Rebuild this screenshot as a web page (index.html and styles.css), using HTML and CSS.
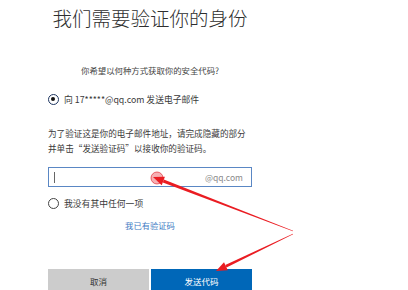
FILE: index.html
```html
<!DOCTYPE html>
<html lang="zh-CN">
<head>
<meta charset="utf-8">
<link rel="stylesheet" href="styles.css">
</head>
<body>
<div class="panel">
  <h1 class="title">我们需要验证你的身份</h1>
  <p class="subtitle">你希望以何种方式获取你的安全代码?</p>
  <label class="option option-first">
    <span class="radio radio-on"></span>
    <span class="option-text">向 17*****@qq.com 发送电子邮件</span>
  </label>
  <p class="desc">为了验证这是你的电子邮件地址，请完成隐藏的部分<br>并单击“发送验证码”以接收你的验证码。</p>
  <div class="field">
    <span class="caret"></span>
    <span class="suffix">@qq.com</span>
  </div>
  <label class="option option-second">
    <span class="radio"></span>
    <span class="option-text">我没有其中任何一项</span>
  </label>
  <a class="link">我已有验证码</a>
  <div class="buttons">
    <div class="btn btn-cancel">取消</div>
    <div class="btn btn-send">发送代码</div>
  </div>
</div>
<svg class="overlay" width="408" height="290" viewBox="0 0 408 290">
  <circle cx="157" cy="178" r="6" fill="rgba(230,30,40,0.35)" stroke="rgba(220,20,30,0.6)" stroke-width="1"/>
  <polygon points="293.1,230.7 292.9,231.3 162.8,182.4 163.8,179.6" fill="#ea1c22"/>
  <polygon points="153,177 164.9,176.8 161.7,185.2" fill="#ea1c22"/>
  <polygon points="293.1,234.3 292.9,233.7 225.3,264.9 226.5,267.6" fill="#ea1c22"/>
  <polygon points="216,271 227.8,270.3 224,262.2" fill="#ea1c22"/>
</svg>
</body>
</html>
```
FILE: styles.css
```css
* { box-sizing: border-box; }
html, body { margin: 0; padding: 0; background: #ffffff; }
body {
  width: 408px;
  height: 290px;
  overflow: hidden;
  position: relative;
  font-family: "Noto Sans CJK SC", "Noto Sans", sans-serif;
  color: #3a3a3a;
}
.panel {
  margin-left: 48px;
  width: 204px;
  display: flex;
  flex-direction: column;
}
.title {
  margin: 4px 0 0 0;
  font-size: 19.5px;
  line-height: 28px;
  font-weight: 300;
  text-align: center;
  color: #2e2e2e;
  white-space: nowrap;
}
.subtitle {
  margin: 32px 0 0 0;
  font-size: 8.4px;
  line-height: 12px;
  text-align: center;
  color: #444;
  white-space: nowrap;
}
.option {
  display: flex;
  align-items: center;
  height: 12px;
  gap: 5px;
  font-size: 8.8px;
  color: #3a3a3a;
  white-space: nowrap;
}
.option-first { margin-top: 17.5px; }
.option-second { margin-top: 10px; }
.radio {
  width: 11px;
  height: 11px;
  border-radius: 50%;
  border: 1.3px solid #444;
  flex: none;
  position: relative;
}
.radio-on { border-color: #1d3560; border-width: 1.5px; }
.radio-on::after {
  content: "";
  position: absolute;
  left: 1.6px;
  top: 1.6px;
  width: 4.8px;
  height: 4.8px;
  border-radius: 50%;
  background: #111;
}
.desc {
  margin: 20px 0 0 0;
  font-size: 8.6px;
  line-height: 15px;
  color: #3a3a3a;
  white-space: nowrap;
}
.field {
  margin-top: 11.5px;
  height: 20px;
  border: 1.5px solid #5a87c4;
  display: flex;
  align-items: center;
  justify-content: space-between;
  padding: 0 8px 0 5px;
}
.caret {
  width: 1px;
  height: 11px;
  background: #666;
}
.suffix {
  font-size: 8.5px;
  color: #8a8a8a;
}
.link {
  margin-top: 10px;
  font-size: 8.3px;
  line-height: 12px;
  text-align: center;
  color: #3f7cc4;
}
.buttons {
  margin-top: 38px;
  display: flex;
  gap: 2px;
}
.btn {
  flex: 1;
  height: 24px;
  display: flex;
  align-items: center;
  justify-content: center;
  font-size: 8.5px;
}
.btn-cancel { background: #cccccc; color: #333; }
.btn-send { background: #0067b8; color: #ffffff; }
.overlay {
  position: absolute;
  left: 0;
  top: 0;
}
```
